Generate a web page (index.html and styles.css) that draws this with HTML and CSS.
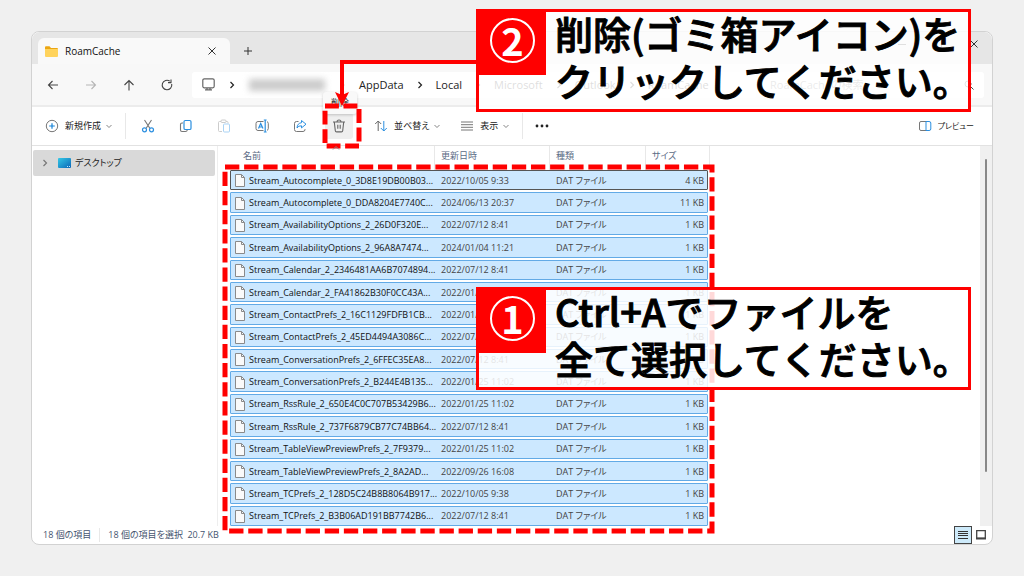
FILE: index.html
```html
<!DOCTYPE html>
<html lang="ja">
<head>
<meta charset="utf-8">
<title>RoamCache</title>
<link rel="stylesheet" href="styles.css">
</head>
<body>
<svg class="defs" aria-hidden="true">
  <symbol id="file" viewBox="0 0 10 13"><path d="M.5.5h6l3 3v9h-9z" fill="#fafafa" stroke="#8a8a8a"/><path d="M6.500.5v3h3" fill="none" stroke="#8a8a8a"/></symbol>
  <symbol id="right" viewBox="0 0 8 8"><path d="M2.500 1 5.500 4l-3 3" fill="none" stroke="currentColor" stroke-width="1.200"/></symbol>
  <symbol id="down" viewBox="0 0 8 8"><path d="M1.500 3l2.500 2.500L6.500 3" fill="none" stroke="#777" stroke-width=".9"/></symbol>
  <symbol id="cross" viewBox="0 0 10 10"><path d="M1.500 1.500l7 7m0-7l-7 7" stroke="currentColor" fill="none"/></symbol>
</svg>

<main class="window">
  <header class="titlebar">
    <div class="tab">
      <svg class="folder" viewBox="0 0 13 11"><path d="M0 1.500Q0 .3 1 .3h3.500L6 2h6q1 0 1 1v1H0z" fill="#eba612"/><path d="M0 3h13v7q0 1-1 1H1q-1 0-1-1z" fill="#ffd35c"/></svg>
      <span class="tab-title">RoamCache</span>
      <button class="plain" aria-label="タブを閉じる"><svg class="i10"><use href="#cross"/></svg></button>
    </div>
    <button class="plain new-tab" aria-label="新しいタブ"><svg class="i10" viewBox="0 0 10 10"><path d="M5 1v8M1 5h8" stroke="#333"/></svg></button>
    <div class="controls">
      <button class="plain" aria-label="最小化"><svg class="i10" viewBox="0 0 10 10"><path d="M1 5.500h8" stroke="#333"/></svg></button>
      <button class="plain" aria-label="最大化"><svg class="i10" viewBox="0 0 10 10"><path d="M1.500 1.500h7v7h-7z" fill="none" stroke="#333"/></svg></button>
      <button class="plain" aria-label="閉じる"><svg class="i10"><use href="#cross"/></svg></button>
    </div>
  </header>

  <nav class="navbar">
    <div class="history">
      <button class="plain" aria-label="戻る"><svg class="i12" viewBox="0 0 12 12"><path d="M11 6H1.500M5.500 2l-4 4 4 4" fill="none" stroke="#444" stroke-width="1.100"/></svg></button>
      <button class="plain" aria-label="進む"><svg class="i12" viewBox="0 0 12 12"><path d="M1 6h9.500M6.500 2l4 4-4 4" fill="none" stroke="#b5b5b5" stroke-width="1.100"/></svg></button>
      <button class="plain" aria-label="上へ"><svg class="i12" viewBox="0 0 12 12"><path d="M6 11.500V1.500M1.500 6L6 1.500 10.500 6" fill="none" stroke="#444" stroke-width="1.100"/></svg></button>
      <button class="plain" aria-label="更新"><svg class="i12" viewBox="0 0 12 12"><path d="M10.700 5A4.800 4.800 0 1 1 8.800 2.100M10 .6v3H7" fill="none" stroke="#444" stroke-width="1.100"/></svg></button>
    </div>
    <div class="address">
      <svg class="monitor" viewBox="0 0 13 13"><rect x=".8" y=".8" width="11.400" height="9" rx="1.500" fill="none" stroke="#666" stroke-width="1.200"/><path d="M3 11.800h7M5 10v1.500M8 10v1.500" stroke="#666" stroke-width="1.200"/></svg>
      <svg class="sep"><use href="#right"/></svg>
      <span class="hidden-name" aria-hidden="true"></span>
      <svg class="sep"><use href="#right"/></svg>
      <a href="#">AppData</a>
      <svg class="sep"><use href="#right"/></svg>
      <a href="#">Local</a>
      <svg class="sep"><use href="#right"/></svg>
      <a href="#">Microsoft</a>
      <svg class="sep"><use href="#right"/></svg>
      <a href="#">Outlook</a>
      <svg class="sep"><use href="#right"/></svg>
      <a href="#">RoamCache</a>
    </div>
    <div class="search">
      <input type="text" aria-label="検索" placeholder="RoamCacheの検索">
      <svg class="i10" viewBox="0 0 10 10"><circle cx="4" cy="4" r="3" fill="none" stroke="#444"/><path d="M6 6l3.500 3.500" stroke="#444"/></svg>
    </div>
  </nav>

  <div class="commands">
    <button class="plain labelled create"><svg class="i14" viewBox="0 0 14 14"><circle cx="7" cy="7" r="5.700" fill="none" stroke="#777"/><path d="M7 4.200v5.600M4.200 7h5.600" stroke="#1683d8" stroke-width="1.200"/></svg><span>新規作成</span><svg class="i8"><use href="#down"/></svg></button>
    <div class="tools">
      <button class="plain" aria-label="切り取り"><svg class="i14" viewBox="0 0 14 14"><path d="M3.500 1l5.500 8.500M10.500 1L5 9.500" fill="none" stroke="#777" stroke-width="1.100"/><circle cx="3.500" cy="10.800" r="2" fill="none" stroke="#2b8fe0" stroke-width="1.200"/><circle cx="10.500" cy="10.800" r="2" fill="none" stroke="#2b8fe0" stroke-width="1.200"/></svg></button>
      <button class="plain" aria-label="コピー"><svg class="i14" viewBox="0 0 14 14"><path d="M4 4H3Q1.500 4 1.500 5.500v5.500Q1.500 12.500 3 12.500h3.500Q8 12.500 8.300 11" fill="none" stroke="#777" stroke-width="1.100"/><rect x="5" y="1.500" width="7" height="9" rx="1.300" fill="none" stroke="#2b8fe0" stroke-width="1.200"/></svg></button>
      <button class="plain" aria-label="貼り付け"><svg class="i14" viewBox="0 0 14 14"><path d="M5 12.500H2.500q-1 0-1-1v-8q0-1 1-1H4m5 0h1q1 0 1 1v1" fill="none" stroke="#ccc"/><rect x="4" y="1" width="5" height="2.500" rx="1" fill="none" stroke="#ccc"/><rect x="6.500" y="5" width="6" height="8" rx="1" fill="none" stroke="#a9d3f5"/></svg></button>
      <button class="plain" aria-label="名前の変更"><svg class="i14" viewBox="0 0 14 14"><path d="M8.500 2.500H3Q1 2.500 1 4.500v5q0 2 2 2h5.500M12 2.700q1.300.3 1.300 1.800v5q0 1.500-1.300 1.800" fill="none" stroke="#777"/><path d="M3.500 9.500L5.700 4.500 8 9.500M4.200 8h3M10.200 1v12M8.800 1h2.800M8.800 13h2.800" fill="none" stroke="#2b8fe0" stroke-width="1.200"/></svg></button>
      <button class="plain" aria-label="共有"><svg class="i14" viewBox="0 0 14 14"><path d="M5.500 2.500H3.500q-2 0-2 2v6q0 2 2 2h6.500q2 0 2-2V10" fill="none" stroke="#777"/><path d="M8.500 1.500l4.500 3.700-4.500 3.700V6.800Q5.500 6.500 4 9q.3-4.800 4.500-5.300z" fill="none" stroke="#2b8fe0"/></svg></button>
      <button class="plain delete" aria-label="削除"><svg class="i14" viewBox="0 0 14 14"><path d="M1 3h12M5 3q0-2 2-2t2 2M2.300 3l1 8.700q.1 1.200 1.300 1.200h4.800q1.200 0 1.300-1.200L11.700 3M5.800 5.800v4M8.200 5.800v4" fill="none" stroke="#666" stroke-width="1.100"/></svg></button>
    </div>
    <button class="plain labelled sort"><svg class="i14" viewBox="0 0 14 14"><path d="M4.200 12V2M1.200 5l3-3 3 3" fill="none" stroke="#666"/><path d="M9.800 2v10M6.800 9l3 3 3-3" fill="none" stroke="#2b8fe0"/></svg><span>並べ替え</span><svg class="i8"><use href="#down"/></svg></button>
    <button class="plain labelled view"><svg class="i14" viewBox="0 0 14 14"><path d="M1 3h12M1 5.700h12M1 8.300h12M1 11h12" stroke="#777"/></svg><span>表示</span><svg class="i8"><use href="#down"/></svg></button>
    <button class="plain more" aria-label="もっと見る"><svg class="i14" viewBox="0 0 14 14"><g fill="#222"><circle cx="2" cy="7" r="1.400"/><circle cx="7" cy="7" r="1.400"/><circle cx="12" cy="7" r="1.400"/></g></svg></button>
    <button class="plain labelled preview"><svg class="i14" viewBox="0 0 14 14"><path d="M8 2.500H3q-1.500 0-1.500 1.500v6q0 1.500 1.500 1.500h5" fill="none" stroke="#777"/><path d="M8 2.500h3q1.800 0 1.800 1.500v6q0 1.500-1.800 1.500H8z" fill="none" stroke="#2b8fe0"/></svg><span>プレビュー</span></button>
    <div class="tooltip" role="tooltip">削除</div>
    <svg class="marker marker-delete" aria-hidden="true"><rect class="dash" width="100%" height="100%" pathLength="32"/></svg>
  </div>

  <div class="content">
    <aside class="tree">
      <a href="#" class="tree-item"><svg class="i8"><use href="#right"/></svg><svg class="desktop" viewBox="0 0 13 10"><defs><linearGradient id="sea" x2="1" y2="1"><stop stop-color="#35c9e6"/><stop offset="1" stop-color="#0a66b8"/></linearGradient></defs><rect width="13" height="10" rx="1" fill="url(#sea)"/><path d="M9 8.500h1m1 0h1" stroke="#bfe6ff"/></svg><span>デスクトップ</span></a>
    </aside>
    <section class="list">
      <table class="files">
        <thead><tr><th>名前<svg class="sorted" viewBox="0 0 8 4"><path d="M1 3.500l3-3 3 3" fill="none" stroke="#888"/></svg></th><th>更新日時</th><th>種類</th><th>サイズ</th></tr></thead>
        <tbody>
          <tr class="focused"><td><svg><use href="#file"/></svg>Stream_Autocomplete_0_3D8E19DB00B03...</td><td>2022/10/05 9:33</td><td>DAT ファイル</td><td>4 KB</td></tr>
          <tr><td><svg><use href="#file"/></svg>Stream_Autocomplete_0_DDA8204E7740C...</td><td>2024/06/13 20:37</td><td>DAT ファイル</td><td>11 KB</td></tr>
          <tr><td><svg><use href="#file"/></svg>Stream_AvailabilityOptions_2_26D0F320E...</td><td>2022/07/12 8:41</td><td>DAT ファイル</td><td>1 KB</td></tr>
          <tr><td><svg><use href="#file"/></svg>Stream_AvailabilityOptions_2_96A8A7474...</td><td>2024/01/04 11:21</td><td>DAT ファイル</td><td>1 KB</td></tr>
          <tr><td><svg><use href="#file"/></svg>Stream_Calendar_2_2346481AA6B7074894...</td><td>2022/07/12 8:41</td><td>DAT ファイル</td><td>1 KB</td></tr>
          <tr><td><svg><use href="#file"/></svg>Stream_Calendar_2_FA41862B30F0CC43A...</td><td>2022/01/25 11:02</td><td>DAT ファイル</td><td>1 KB</td></tr>
          <tr><td><svg><use href="#file"/></svg>Stream_ContactPrefs_2_16C1129FDFB1CB...</td><td>2022/01/25 11:02</td><td>DAT ファイル</td><td>1 KB</td></tr>
          <tr><td><svg><use href="#file"/></svg>Stream_ContactPrefs_2_45ED4494A3086C...</td><td>2022/07/12 8:41</td><td>DAT ファイル</td><td>1 KB</td></tr>
          <tr><td><svg><use href="#file"/></svg>Stream_ConversationPrefs_2_6FFEC35EA8...</td><td>2022/07/12 8:41</td><td>DAT ファイル</td><td>1 KB</td></tr>
          <tr><td><svg><use href="#file"/></svg>Stream_ConversationPrefs_2_B244E4B135...</td><td>2022/01/25 11:02</td><td>DAT ファイル</td><td>1 KB</td></tr>
          <tr><td><svg><use href="#file"/></svg>Stream_RssRule_2_650E4C0C707B53429B6...</td><td>2022/01/25 11:02</td><td>DAT ファイル</td><td>1 KB</td></tr>
          <tr><td><svg><use href="#file"/></svg>Stream_RssRule_2_737F6879CB77C74BB64...</td><td>2022/07/12 8:41</td><td>DAT ファイル</td><td>1 KB</td></tr>
          <tr><td><svg><use href="#file"/></svg>Stream_TableViewPreviewPrefs_2_7F9379...</td><td>2022/01/25 11:02</td><td>DAT ファイル</td><td>1 KB</td></tr>
          <tr><td><svg><use href="#file"/></svg>Stream_TableViewPreviewPrefs_2_8A2AD...</td><td>2022/09/26 16:08</td><td>DAT ファイル</td><td>1 KB</td></tr>
          <tr><td><svg><use href="#file"/></svg>Stream_TCPrefs_2_128D5C24B8B8064B917...</td><td>2022/10/05 9:38</td><td>DAT ファイル</td><td>1 KB</td></tr>
          <tr><td><svg><use href="#file"/></svg>Stream_TCPrefs_2_B3B06AD191BB7742B6...</td><td>2022/07/12 8:41</td><td>DAT ファイル</td><td>1 KB</td></tr>
        </tbody>
      </table>
      <svg class="marker marker-files" aria-hidden="true"><rect class="dash" width="100%" height="100%" pathLength="356"/></svg>
    </section>
    <div class="scrollbar"><div class="thumb"></div></div>
  </div>

  <footer class="status">
    <span>18 個の項目</span><span class="selected">18 個の項目を選択&ensp;20.7 KB</span>
    <div class="modes">
      <button class="mode on" aria-label="詳細"><svg viewBox="0 0 10 10"><path d="M0 1.500h10M0 3.500h10M0 5.500h10M0 8.500h10" stroke="#333"/></svg></button>
      <button class="mode" aria-label="大アイコン"><svg viewBox="0 0 10 10"><path d="M.7.700h8.600v7.600H.7z" fill="#fff" stroke="#444" stroke-width="1.300"/><path d="M0 8.500h10" stroke="#444" stroke-width="2"/></svg></button>
    </div>
  </footer>
</main>

<svg class="arrow" viewBox="0 0 142 46" aria-hidden="true"><path d="M142 2H8v34" fill="none" stroke="#f00" stroke-width="4"/><path d="M1 32l7 3 7-3-7 14z" fill="#f00"/></svg>
<section class="callout second"><div class="badge"><span>2</span></div><p>削除(ゴミ箱アイコン)を<br>クリックしてください。</p></section>
<section class="callout first-step"><div class="badge"><span>1</span></div><p>Ctrl+Aでファイルを<br>全て選択してください。</p></section>
</body>
</html>
```
FILE: styles.css
```css
* { box-sizing: border-box; }
body {
  margin: 0;
  min-height: 100vh;
  padding: 31px;
  display: flex;
  position: relative;
  background: #f0f0f0;
  color: #333;
  font: 9px/14px "Open Sans", "Noto Sans CJK JP", sans-serif;
  font-feature-settings: "palt";
}
svg { display: block; flex: none; }
a { color: inherit; text-decoration: none; }
.defs { position: absolute; width: 0; height: 0; }
.i8, .sep { width: 8px; height: 8px; }
.i10 { width: 10px; height: 10px; }
.i12 { width: 12px; height: 12px; }
.i14 { width: 14px; height: 14px; }
.plain {
  display: flex;
  align-items: center;
  justify-content: center;
  padding: 0;
  border: 0;
  background: none;
  color: inherit;
  font: inherit;
  font-feature-settings: inherit;
}

.window {
  flex: 1;
  display: flex;
  flex-direction: column;
  border: 1px solid #d2d2d2;
  border-radius: 8px;
  background: #fff;
}
.titlebar {
  display: flex;
  align-items: stretch;
  height: 32px;
  padding: 6px 0 0 6px;
  border-radius: 8px 8px 0 0;
  background: #e6e6e6;
}
.tab {
  display: flex;
  align-items: center;
  width: 192px;
  padding: 0 13px 0 7px;
  border-radius: 6px 6px 0 0;
  background: #f9f9f9;
}
.folder { width: 13px; height: 11px; }
.tab-title { flex: 1; padding-left: 7px; font-size: 10px; font-weight: 500; color: #111; }
.new-tab { width: 36px; }
.controls { display: flex; margin-left: auto; padding-bottom: 14px; }
.controls button { width: 36px; }

.navbar {
  display: flex;
  align-items: center;
  height: 43px;
  padding: 0 8px 0 2px;
  gap: 6px;
  border-bottom: 2px solid #ececec;
  background: #f8f8f8;
}
.history { display: flex; }
.history button { width: 38px; height: 26px; }
.address, .search {
  display: flex;
  align-items: center;
  height: 26px;
  border-radius: 3px;
  background: #fff;
}
.address { flex: 1; padding-left: 10px; font-size: 11px; color: #222; }
.monitor { width: 13px; height: 13px; }
.sep { margin: 0 13px; }
.sep ~ a ~ .sep { margin: 0 12px; }
.hidden-name {
  width: 76px;
  height: 12px;
  background: #ccc;
  filter: blur(3px);
}
.search { width: 222px; padding: 0 10px 0 8px; }
.search input {
  flex: 1;
  min-width: 0;
  padding: 0;
  border: 0;
  background: none;
  font: inherit;
  font-size: 11px;
}

.commands {
  position: relative;
  display: flex;
  align-items: center;
  height: 39px;
  padding: 0 18px 0 13px;
  border-bottom: 1px solid #e2e2e2;
  color: #222;
}
.labelled span { padding: 0 4px 0 6px; }
.create, .view { height: 26px; border-right: 1px solid #e8e8e8; }
.create { padding-right: 12px; }
.tools { display: flex; padding-left: 3px; }
.tools button { width: 38px; height: 26px; }
.tools .delete { width: 28px; margin: 0 6px; border-radius: 3px; background: #efefef; }
.sort { padding-left: 15px; }
.view { padding: 0 12px 0 19px; }
.more { width: 38px; }
.preview { margin-left: auto; font-size: 8px; }
.preview span { padding-right: 0; }
.tooltip {
  position: absolute;
  left: 291px;
  top: -15px;
  padding: 4px 8px;
  border-radius: 3px;
  background: #f9f9f9;
  box-shadow: 0 1px 3px #0003;
}
.marker { position: absolute; overflow: visible; pointer-events: none; }
.dash {
  fill: none;
  stroke: #f00;
  stroke-width: 5px;
  stroke-dasharray: 3 1;
}
.marker-delete { left: 293px; top: -1px; width: 34px; height: 40px; }

.content { flex: 1; display: flex; }
.tree { width: 186px; padding: 4px 2px 0 1px; border-right: 1px solid #eee; }
.tree-item {
  display: flex;
  align-items: center;
  gap: 4px;
  height: 26px;
  padding-left: 8px;
  border-radius: 2px;
  background: #d9d9d9;
  color: #222;
}
.tree-item .i8 { margin-right: 5px; color: #777; }
.desktop { width: 13px; height: 10px; }

.list { position: relative; display: flex; flex: 1; padding-left: 12px; }
.files { display: flex; flex-direction: column; width: 478px; }
.files thead { margin-right: -2px; }
.files tr {
  display: grid;
  grid-template-columns: 205px 115px 96px 1fr;
  align-items: center;
}
.files thead, .files th { display: block; }
.files th {
  position: relative;
  height: 24px;
  padding: 3px 0 0 6px;
  border-right: 1px solid #e8e8e8;
  font-weight: 400;
  text-align: left;
  color: #5b6b85;
}
.files th:first-child { padding-left: 13px; }
.sorted { position: absolute; left: 102px; top: 0; width: 8px; height: 4px; }
.files tbody { flex: 1; display: grid; grid-auto-rows: 1fr; gap: 2px; }
.files tbody tr {
  min-height: 20px;
  border: 1px solid #62aae6;
  border-radius: 1px;
  background: #cce8ff;
}
.files tbody tr.focused { border-color: #555; }
.files td { padding: 1px 0 0 5px; white-space: nowrap; color: #444; }
.files td:first-child {
  display: flex;
  align-items: center;
  gap: 4px;
  padding-left: 4px;
  color: #111;
}
.files td:last-child { padding-right: 3px; text-align: right; }
.files td svg { width: 10px; height: 13px; }
.marker-files { left: 7px; top: 21px; width: 487px; height: calc(100% - 16px); }

.scrollbar { width: 12px; padding: 13px 0 54px; background: #f0f0f0; }
.thumb { width: 2px; height: 100%; margin-left: 5px; border-radius: 1px; background: #888; }

.status {
  display: flex;
  align-items: center;
  height: 18px;
  padding: 0 2px 0 11px;
  color: #44546e;
}
.status .selected { margin-left: 8px; padding-left: 8px; border-left: 1px solid #e8e8e8; }
.modes { display: flex; margin-left: auto; }
.mode {
  display: flex;
  align-items: center;
  justify-content: center;
  width: 18px;
  height: 18px;
  padding: 0;
  border: 0;
  background: none;
}
.mode.on { border: 1px solid #444; background: #cdeafa; }
.mode svg { width: 10px; height: 10px; }

.arrow { position: absolute; left: 334px; top: 60px; width: 142px; height: 46px; }
.callout {
  position: absolute;
  left: 476px;
  display: flex;
  align-items: flex-start;
  width: 495px;
  border: 3px solid #f00;
  background: #ffffffd9;
  color: #000;
}
.second { top: 9px; }
.first-step { top: 287px; }
.callout p {
  margin: -3px 0 0;
  padding: 0 0 6px 9px;
  font: 500 38px/47px "Noto Sans CJK JP", sans-serif;
  font-feature-settings: normal;
  -webkit-text-stroke: 1px #000;
  white-space: nowrap;
}
.badge {
  flex: none;
  display: flex;
  align-items: center;
  justify-content: center;
  width: 67px;
  height: 63px;
  padding-bottom: 7px;
  background: #f00;
}
.badge span {
  width: 45px;
  height: 45px;
  border: 2px solid #fff;
  border-radius: 50%;
  color: #fff;
  font: 700 38px/40px "Noto Sans CJK JP", sans-serif;
  text-align: center;
}
```
